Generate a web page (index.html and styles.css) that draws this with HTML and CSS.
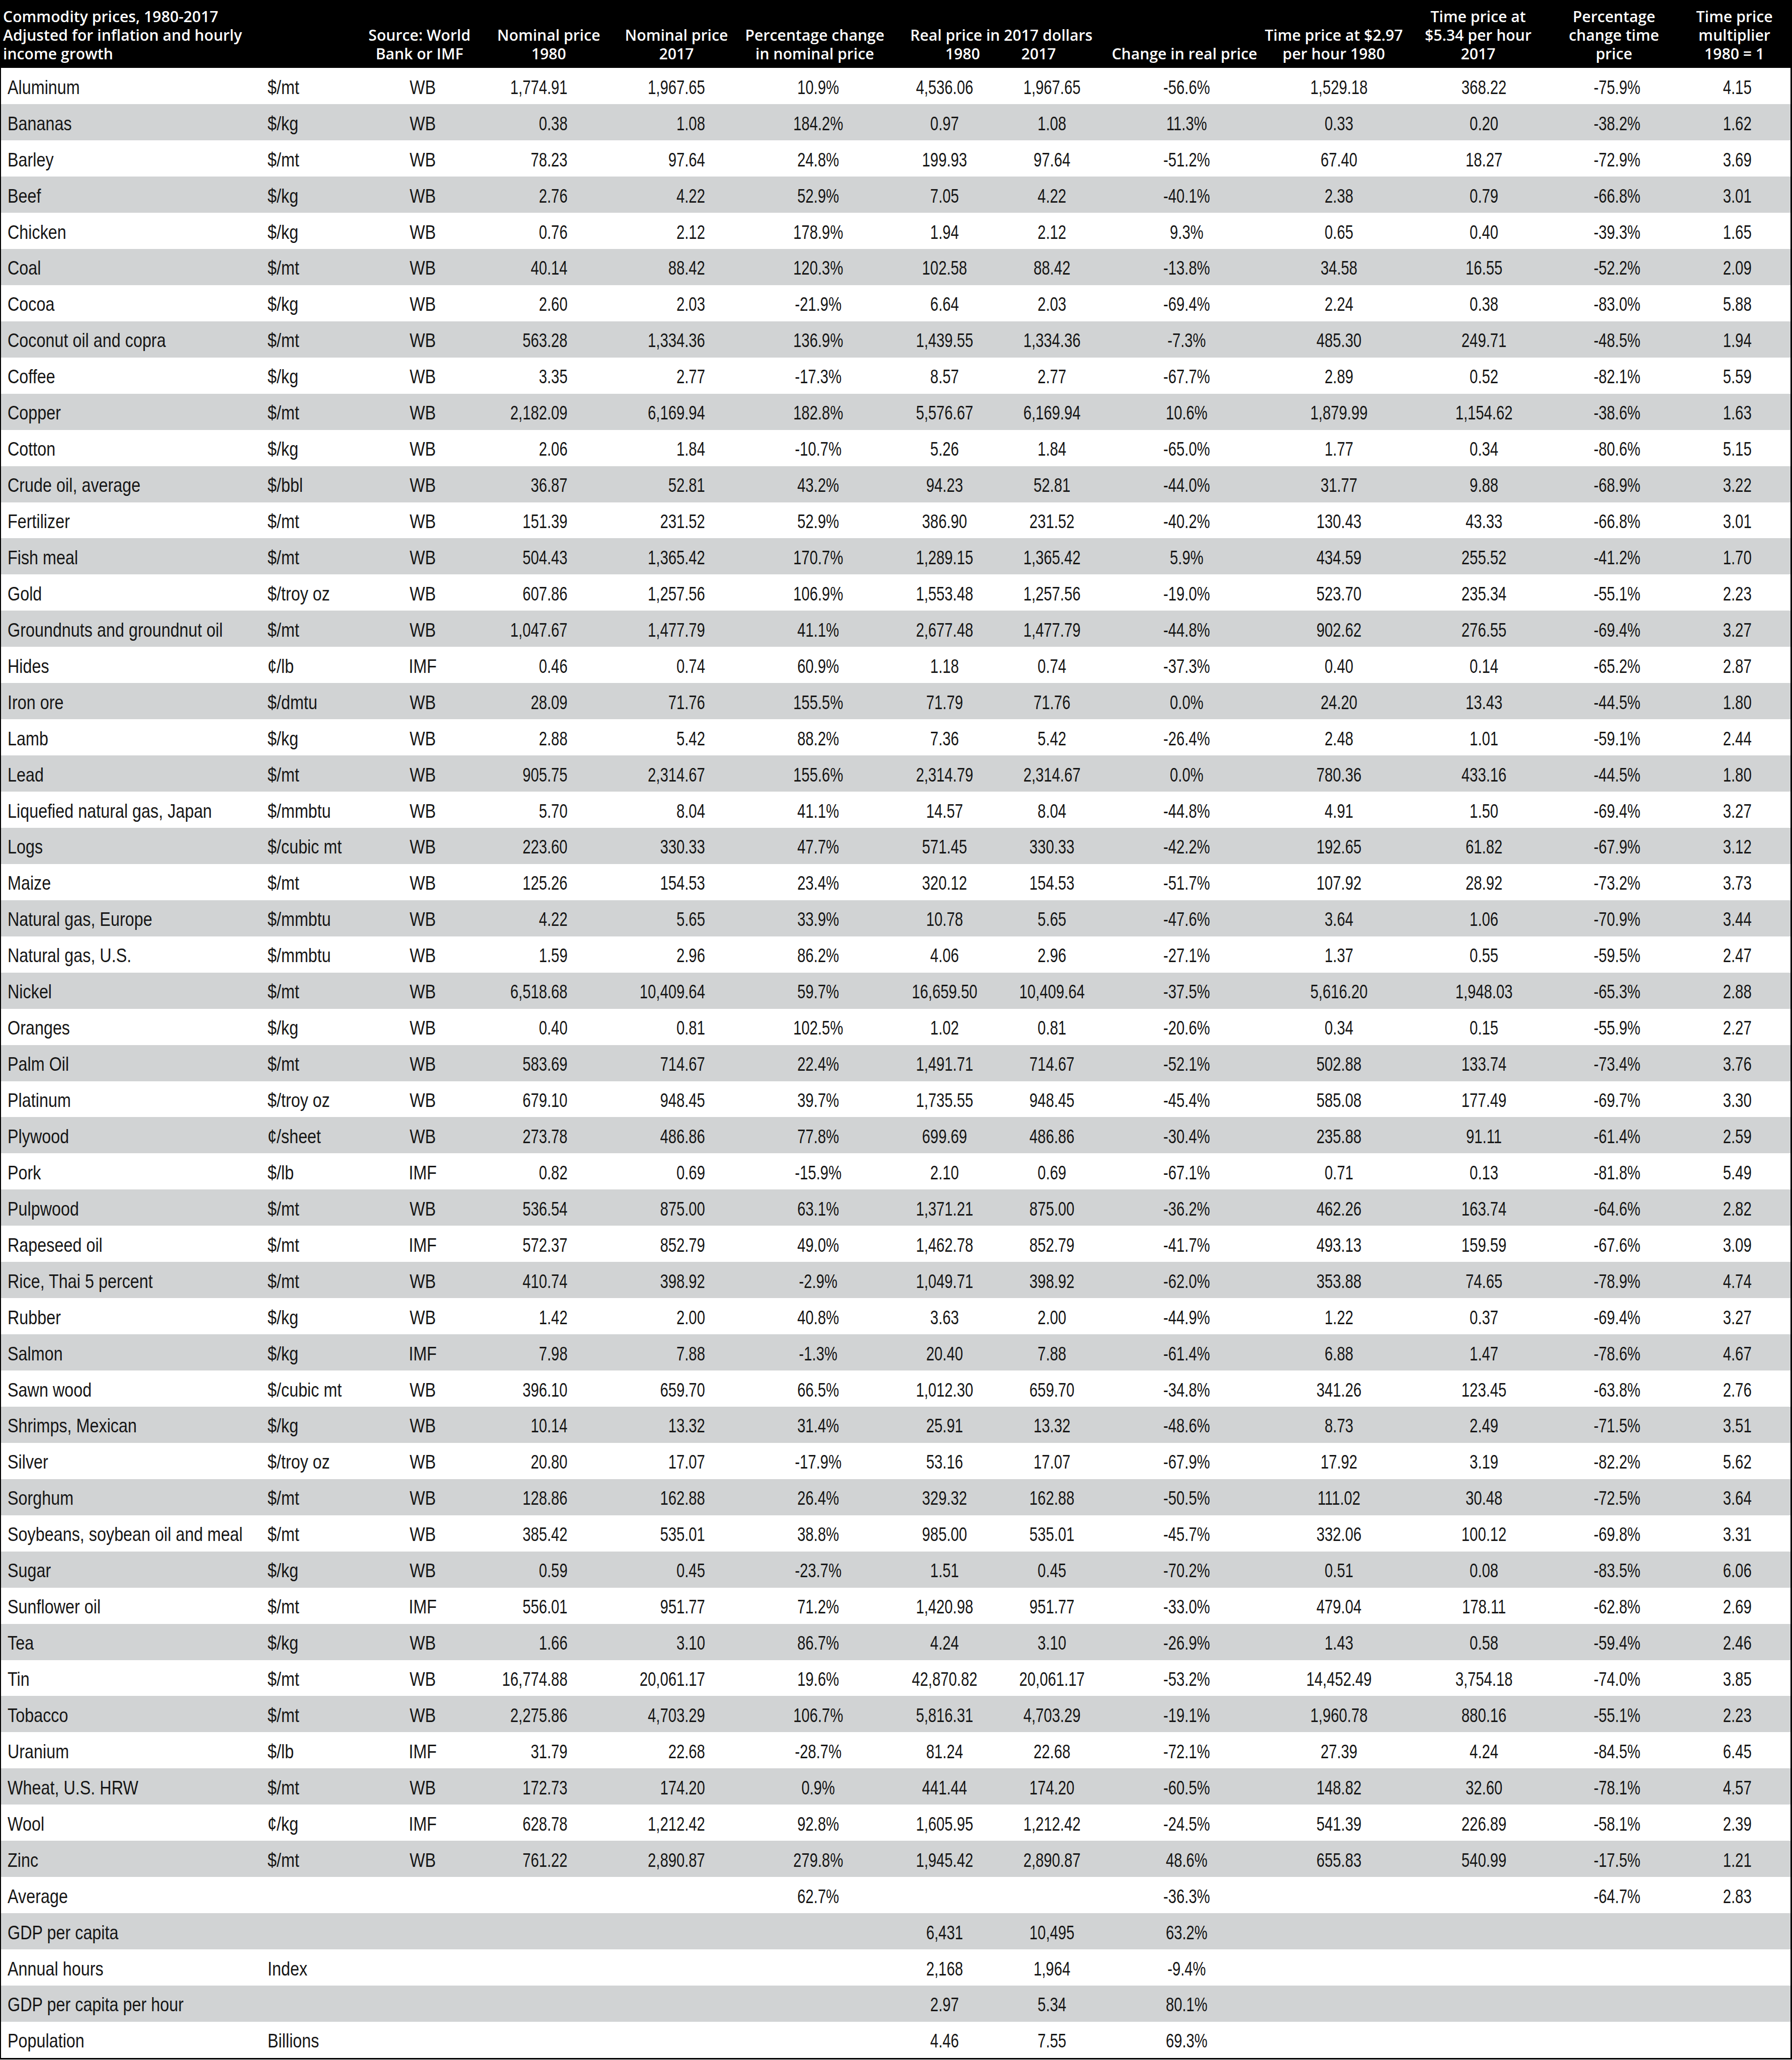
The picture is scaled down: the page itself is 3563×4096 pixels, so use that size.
FILE: index.html
```html
<!DOCTYPE html>
<html lang="en">
<head>
<meta charset="utf-8">
<title>Commodity prices, 1980-2017</title>
<link rel="stylesheet" href="styles.css">
</head>
<body>
<div class="table">
  <div class="head">
    <div class="h title">Commodity prices, 1980-2017<br>Adjusted for inflation and hourly<br>income growth</div>
    <div class="h">Source: World<br>Bank or IMF</div>
    <div class="h">Nominal price<br>1980</div>
    <div class="h">Nominal price<br>2017</div>
    <div class="h">Percentage change<br>in nominal price</div>
    <div class="h real"><div>Real price in 2017 dollars</div><div class="sub"><span>1980</span><span>2017</span></div></div>
    <div class="h">Change in real price</div>
    <div class="h">Time price at $2.97<br>per hour 1980</div>
    <div class="h">Time price at<br>$5.34 per hour<br>2017</div>
    <div class="h">Percentage<br>change time<br>price</div>
    <div class="h">Time price<br>multiplier<br>1980 = 1</div>
  </div>
  <div class="body">
    <div class="row"><span class="n">Aluminum</span><span class="u">$/mt</span><span class="s">WB</span><span class="a">1,774.91</span><span class="b">1,967.65</span><span class="c">10.9%</span><span class="c">4,536.06</span><span class="c">1,967.65</span><span class="c">-56.6%</span><span class="c">1,529.18</span><span class="c">368.22</span><span class="c">-75.9%</span><span class="c">4.15</span></div>
    <div class="row"><span class="n">Bananas</span><span class="u">$/kg</span><span class="s">WB</span><span class="a">0.38</span><span class="b">1.08</span><span class="c">184.2%</span><span class="c">0.97</span><span class="c">1.08</span><span class="c">11.3%</span><span class="c">0.33</span><span class="c">0.20</span><span class="c">-38.2%</span><span class="c">1.62</span></div>
    <div class="row"><span class="n">Barley</span><span class="u">$/mt</span><span class="s">WB</span><span class="a">78.23</span><span class="b">97.64</span><span class="c">24.8%</span><span class="c">199.93</span><span class="c">97.64</span><span class="c">-51.2%</span><span class="c">67.40</span><span class="c">18.27</span><span class="c">-72.9%</span><span class="c">3.69</span></div>
    <div class="row"><span class="n">Beef</span><span class="u">$/kg</span><span class="s">WB</span><span class="a">2.76</span><span class="b">4.22</span><span class="c">52.9%</span><span class="c">7.05</span><span class="c">4.22</span><span class="c">-40.1%</span><span class="c">2.38</span><span class="c">0.79</span><span class="c">-66.8%</span><span class="c">3.01</span></div>
    <div class="row"><span class="n">Chicken</span><span class="u">$/kg</span><span class="s">WB</span><span class="a">0.76</span><span class="b">2.12</span><span class="c">178.9%</span><span class="c">1.94</span><span class="c">2.12</span><span class="c">9.3%</span><span class="c">0.65</span><span class="c">0.40</span><span class="c">-39.3%</span><span class="c">1.65</span></div>
    <div class="row"><span class="n">Coal</span><span class="u">$/mt</span><span class="s">WB</span><span class="a">40.14</span><span class="b">88.42</span><span class="c">120.3%</span><span class="c">102.58</span><span class="c">88.42</span><span class="c">-13.8%</span><span class="c">34.58</span><span class="c">16.55</span><span class="c">-52.2%</span><span class="c">2.09</span></div>
    <div class="row"><span class="n">Cocoa</span><span class="u">$/kg</span><span class="s">WB</span><span class="a">2.60</span><span class="b">2.03</span><span class="c">-21.9%</span><span class="c">6.64</span><span class="c">2.03</span><span class="c">-69.4%</span><span class="c">2.24</span><span class="c">0.38</span><span class="c">-83.0%</span><span class="c">5.88</span></div>
    <div class="row"><span class="n">Coconut oil and copra</span><span class="u">$/mt</span><span class="s">WB</span><span class="a">563.28</span><span class="b">1,334.36</span><span class="c">136.9%</span><span class="c">1,439.55</span><span class="c">1,334.36</span><span class="c">-7.3%</span><span class="c">485.30</span><span class="c">249.71</span><span class="c">-48.5%</span><span class="c">1.94</span></div>
    <div class="row"><span class="n">Coffee</span><span class="u">$/kg</span><span class="s">WB</span><span class="a">3.35</span><span class="b">2.77</span><span class="c">-17.3%</span><span class="c">8.57</span><span class="c">2.77</span><span class="c">-67.7%</span><span class="c">2.89</span><span class="c">0.52</span><span class="c">-82.1%</span><span class="c">5.59</span></div>
    <div class="row"><span class="n">Copper</span><span class="u">$/mt</span><span class="s">WB</span><span class="a">2,182.09</span><span class="b">6,169.94</span><span class="c">182.8%</span><span class="c">5,576.67</span><span class="c">6,169.94</span><span class="c">10.6%</span><span class="c">1,879.99</span><span class="c">1,154.62</span><span class="c">-38.6%</span><span class="c">1.63</span></div>
    <div class="row"><span class="n">Cotton</span><span class="u">$/kg</span><span class="s">WB</span><span class="a">2.06</span><span class="b">1.84</span><span class="c">-10.7%</span><span class="c">5.26</span><span class="c">1.84</span><span class="c">-65.0%</span><span class="c">1.77</span><span class="c">0.34</span><span class="c">-80.6%</span><span class="c">5.15</span></div>
    <div class="row"><span class="n">Crude oil, average</span><span class="u">$/bbl</span><span class="s">WB</span><span class="a">36.87</span><span class="b">52.81</span><span class="c">43.2%</span><span class="c">94.23</span><span class="c">52.81</span><span class="c">-44.0%</span><span class="c">31.77</span><span class="c">9.88</span><span class="c">-68.9%</span><span class="c">3.22</span></div>
    <div class="row"><span class="n">Fertilizer</span><span class="u">$/mt</span><span class="s">WB</span><span class="a">151.39</span><span class="b">231.52</span><span class="c">52.9%</span><span class="c">386.90</span><span class="c">231.52</span><span class="c">-40.2%</span><span class="c">130.43</span><span class="c">43.33</span><span class="c">-66.8%</span><span class="c">3.01</span></div>
    <div class="row"><span class="n">Fish meal</span><span class="u">$/mt</span><span class="s">WB</span><span class="a">504.43</span><span class="b">1,365.42</span><span class="c">170.7%</span><span class="c">1,289.15</span><span class="c">1,365.42</span><span class="c">5.9%</span><span class="c">434.59</span><span class="c">255.52</span><span class="c">-41.2%</span><span class="c">1.70</span></div>
    <div class="row"><span class="n">Gold</span><span class="u">$/troy oz</span><span class="s">WB</span><span class="a">607.86</span><span class="b">1,257.56</span><span class="c">106.9%</span><span class="c">1,553.48</span><span class="c">1,257.56</span><span class="c">-19.0%</span><span class="c">523.70</span><span class="c">235.34</span><span class="c">-55.1%</span><span class="c">2.23</span></div>
    <div class="row"><span class="n">Groundnuts and groundnut oil</span><span class="u">$/mt</span><span class="s">WB</span><span class="a">1,047.67</span><span class="b">1,477.79</span><span class="c">41.1%</span><span class="c">2,677.48</span><span class="c">1,477.79</span><span class="c">-44.8%</span><span class="c">902.62</span><span class="c">276.55</span><span class="c">-69.4%</span><span class="c">3.27</span></div>
    <div class="row"><span class="n">Hides</span><span class="u">¢/lb</span><span class="s">IMF</span><span class="a">0.46</span><span class="b">0.74</span><span class="c">60.9%</span><span class="c">1.18</span><span class="c">0.74</span><span class="c">-37.3%</span><span class="c">0.40</span><span class="c">0.14</span><span class="c">-65.2%</span><span class="c">2.87</span></div>
    <div class="row"><span class="n">Iron ore</span><span class="u">$/dmtu</span><span class="s">WB</span><span class="a">28.09</span><span class="b">71.76</span><span class="c">155.5%</span><span class="c">71.79</span><span class="c">71.76</span><span class="c">0.0%</span><span class="c">24.20</span><span class="c">13.43</span><span class="c">-44.5%</span><span class="c">1.80</span></div>
    <div class="row"><span class="n">Lamb</span><span class="u">$/kg</span><span class="s">WB</span><span class="a">2.88</span><span class="b">5.42</span><span class="c">88.2%</span><span class="c">7.36</span><span class="c">5.42</span><span class="c">-26.4%</span><span class="c">2.48</span><span class="c">1.01</span><span class="c">-59.1%</span><span class="c">2.44</span></div>
    <div class="row"><span class="n">Lead</span><span class="u">$/mt</span><span class="s">WB</span><span class="a">905.75</span><span class="b">2,314.67</span><span class="c">155.6%</span><span class="c">2,314.79</span><span class="c">2,314.67</span><span class="c">0.0%</span><span class="c">780.36</span><span class="c">433.16</span><span class="c">-44.5%</span><span class="c">1.80</span></div>
    <div class="row"><span class="n">Liquefied natural gas, Japan</span><span class="u">$/mmbtu</span><span class="s">WB</span><span class="a">5.70</span><span class="b">8.04</span><span class="c">41.1%</span><span class="c">14.57</span><span class="c">8.04</span><span class="c">-44.8%</span><span class="c">4.91</span><span class="c">1.50</span><span class="c">-69.4%</span><span class="c">3.27</span></div>
    <div class="row"><span class="n">Logs</span><span class="u">$/cubic mt</span><span class="s">WB</span><span class="a">223.60</span><span class="b">330.33</span><span class="c">47.7%</span><span class="c">571.45</span><span class="c">330.33</span><span class="c">-42.2%</span><span class="c">192.65</span><span class="c">61.82</span><span class="c">-67.9%</span><span class="c">3.12</span></div>
    <div class="row"><span class="n">Maize</span><span class="u">$/mt</span><span class="s">WB</span><span class="a">125.26</span><span class="b">154.53</span><span class="c">23.4%</span><span class="c">320.12</span><span class="c">154.53</span><span class="c">-51.7%</span><span class="c">107.92</span><span class="c">28.92</span><span class="c">-73.2%</span><span class="c">3.73</span></div>
    <div class="row"><span class="n">Natural gas, Europe</span><span class="u">$/mmbtu</span><span class="s">WB</span><span class="a">4.22</span><span class="b">5.65</span><span class="c">33.9%</span><span class="c">10.78</span><span class="c">5.65</span><span class="c">-47.6%</span><span class="c">3.64</span><span class="c">1.06</span><span class="c">-70.9%</span><span class="c">3.44</span></div>
    <div class="row"><span class="n">Natural gas, U.S.</span><span class="u">$/mmbtu</span><span class="s">WB</span><span class="a">1.59</span><span class="b">2.96</span><span class="c">86.2%</span><span class="c">4.06</span><span class="c">2.96</span><span class="c">-27.1%</span><span class="c">1.37</span><span class="c">0.55</span><span class="c">-59.5%</span><span class="c">2.47</span></div>
    <div class="row"><span class="n">Nickel</span><span class="u">$/mt</span><span class="s">WB</span><span class="a">6,518.68</span><span class="b">10,409.64</span><span class="c">59.7%</span><span class="c">16,659.50</span><span class="c">10,409.64</span><span class="c">-37.5%</span><span class="c">5,616.20</span><span class="c">1,948.03</span><span class="c">-65.3%</span><span class="c">2.88</span></div>
    <div class="row"><span class="n">Oranges</span><span class="u">$/kg</span><span class="s">WB</span><span class="a">0.40</span><span class="b">0.81</span><span class="c">102.5%</span><span class="c">1.02</span><span class="c">0.81</span><span class="c">-20.6%</span><span class="c">0.34</span><span class="c">0.15</span><span class="c">-55.9%</span><span class="c">2.27</span></div>
    <div class="row"><span class="n">Palm Oil</span><span class="u">$/mt</span><span class="s">WB</span><span class="a">583.69</span><span class="b">714.67</span><span class="c">22.4%</span><span class="c">1,491.71</span><span class="c">714.67</span><span class="c">-52.1%</span><span class="c">502.88</span><span class="c">133.74</span><span class="c">-73.4%</span><span class="c">3.76</span></div>
    <div class="row"><span class="n">Platinum</span><span class="u">$/troy oz</span><span class="s">WB</span><span class="a">679.10</span><span class="b">948.45</span><span class="c">39.7%</span><span class="c">1,735.55</span><span class="c">948.45</span><span class="c">-45.4%</span><span class="c">585.08</span><span class="c">177.49</span><span class="c">-69.7%</span><span class="c">3.30</span></div>
    <div class="row"><span class="n">Plywood</span><span class="u">¢/sheet</span><span class="s">WB</span><span class="a">273.78</span><span class="b">486.86</span><span class="c">77.8%</span><span class="c">699.69</span><span class="c">486.86</span><span class="c">-30.4%</span><span class="c">235.88</span><span class="c">91.11</span><span class="c">-61.4%</span><span class="c">2.59</span></div>
    <div class="row"><span class="n">Pork</span><span class="u">$/lb</span><span class="s">IMF</span><span class="a">0.82</span><span class="b">0.69</span><span class="c">-15.9%</span><span class="c">2.10</span><span class="c">0.69</span><span class="c">-67.1%</span><span class="c">0.71</span><span class="c">0.13</span><span class="c">-81.8%</span><span class="c">5.49</span></div>
    <div class="row"><span class="n">Pulpwood</span><span class="u">$/mt</span><span class="s">WB</span><span class="a">536.54</span><span class="b">875.00</span><span class="c">63.1%</span><span class="c">1,371.21</span><span class="c">875.00</span><span class="c">-36.2%</span><span class="c">462.26</span><span class="c">163.74</span><span class="c">-64.6%</span><span class="c">2.82</span></div>
    <div class="row"><span class="n">Rapeseed oil</span><span class="u">$/mt</span><span class="s">IMF</span><span class="a">572.37</span><span class="b">852.79</span><span class="c">49.0%</span><span class="c">1,462.78</span><span class="c">852.79</span><span class="c">-41.7%</span><span class="c">493.13</span><span class="c">159.59</span><span class="c">-67.6%</span><span class="c">3.09</span></div>
    <div class="row"><span class="n">Rice, Thai 5 percent</span><span class="u">$/mt</span><span class="s">WB</span><span class="a">410.74</span><span class="b">398.92</span><span class="c">-2.9%</span><span class="c">1,049.71</span><span class="c">398.92</span><span class="c">-62.0%</span><span class="c">353.88</span><span class="c">74.65</span><span class="c">-78.9%</span><span class="c">4.74</span></div>
    <div class="row"><span class="n">Rubber</span><span class="u">$/kg</span><span class="s">WB</span><span class="a">1.42</span><span class="b">2.00</span><span class="c">40.8%</span><span class="c">3.63</span><span class="c">2.00</span><span class="c">-44.9%</span><span class="c">1.22</span><span class="c">0.37</span><span class="c">-69.4%</span><span class="c">3.27</span></div>
    <div class="row"><span class="n">Salmon</span><span class="u">$/kg</span><span class="s">IMF</span><span class="a">7.98</span><span class="b">7.88</span><span class="c">-1.3%</span><span class="c">20.40</span><span class="c">7.88</span><span class="c">-61.4%</span><span class="c">6.88</span><span class="c">1.47</span><span class="c">-78.6%</span><span class="c">4.67</span></div>
    <div class="row"><span class="n">Sawn wood</span><span class="u">$/cubic mt</span><span class="s">WB</span><span class="a">396.10</span><span class="b">659.70</span><span class="c">66.5%</span><span class="c">1,012.30</span><span class="c">659.70</span><span class="c">-34.8%</span><span class="c">341.26</span><span class="c">123.45</span><span class="c">-63.8%</span><span class="c">2.76</span></div>
    <div class="row"><span class="n">Shrimps, Mexican</span><span class="u">$/kg</span><span class="s">WB</span><span class="a">10.14</span><span class="b">13.32</span><span class="c">31.4%</span><span class="c">25.91</span><span class="c">13.32</span><span class="c">-48.6%</span><span class="c">8.73</span><span class="c">2.49</span><span class="c">-71.5%</span><span class="c">3.51</span></div>
    <div class="row"><span class="n">Silver</span><span class="u">$/troy oz</span><span class="s">WB</span><span class="a">20.80</span><span class="b">17.07</span><span class="c">-17.9%</span><span class="c">53.16</span><span class="c">17.07</span><span class="c">-67.9%</span><span class="c">17.92</span><span class="c">3.19</span><span class="c">-82.2%</span><span class="c">5.62</span></div>
    <div class="row"><span class="n">Sorghum</span><span class="u">$/mt</span><span class="s">WB</span><span class="a">128.86</span><span class="b">162.88</span><span class="c">26.4%</span><span class="c">329.32</span><span class="c">162.88</span><span class="c">-50.5%</span><span class="c">111.02</span><span class="c">30.48</span><span class="c">-72.5%</span><span class="c">3.64</span></div>
    <div class="row"><span class="n">Soybeans, soybean oil and meal</span><span class="u">$/mt</span><span class="s">WB</span><span class="a">385.42</span><span class="b">535.01</span><span class="c">38.8%</span><span class="c">985.00</span><span class="c">535.01</span><span class="c">-45.7%</span><span class="c">332.06</span><span class="c">100.12</span><span class="c">-69.8%</span><span class="c">3.31</span></div>
    <div class="row"><span class="n">Sugar</span><span class="u">$/kg</span><span class="s">WB</span><span class="a">0.59</span><span class="b">0.45</span><span class="c">-23.7%</span><span class="c">1.51</span><span class="c">0.45</span><span class="c">-70.2%</span><span class="c">0.51</span><span class="c">0.08</span><span class="c">-83.5%</span><span class="c">6.06</span></div>
    <div class="row"><span class="n">Sunflower oil</span><span class="u">$/mt</span><span class="s">IMF</span><span class="a">556.01</span><span class="b">951.77</span><span class="c">71.2%</span><span class="c">1,420.98</span><span class="c">951.77</span><span class="c">-33.0%</span><span class="c">479.04</span><span class="c">178.11</span><span class="c">-62.8%</span><span class="c">2.69</span></div>
    <div class="row"><span class="n">Tea</span><span class="u">$/kg</span><span class="s">WB</span><span class="a">1.66</span><span class="b">3.10</span><span class="c">86.7%</span><span class="c">4.24</span><span class="c">3.10</span><span class="c">-26.9%</span><span class="c">1.43</span><span class="c">0.58</span><span class="c">-59.4%</span><span class="c">2.46</span></div>
    <div class="row"><span class="n">Tin</span><span class="u">$/mt</span><span class="s">WB</span><span class="a">16,774.88</span><span class="b">20,061.17</span><span class="c">19.6%</span><span class="c">42,870.82</span><span class="c">20,061.17</span><span class="c">-53.2%</span><span class="c">14,452.49</span><span class="c">3,754.18</span><span class="c">-74.0%</span><span class="c">3.85</span></div>
    <div class="row"><span class="n">Tobacco</span><span class="u">$/mt</span><span class="s">WB</span><span class="a">2,275.86</span><span class="b">4,703.29</span><span class="c">106.7%</span><span class="c">5,816.31</span><span class="c">4,703.29</span><span class="c">-19.1%</span><span class="c">1,960.78</span><span class="c">880.16</span><span class="c">-55.1%</span><span class="c">2.23</span></div>
    <div class="row"><span class="n">Uranium</span><span class="u">$/lb</span><span class="s">IMF</span><span class="a">31.79</span><span class="b">22.68</span><span class="c">-28.7%</span><span class="c">81.24</span><span class="c">22.68</span><span class="c">-72.1%</span><span class="c">27.39</span><span class="c">4.24</span><span class="c">-84.5%</span><span class="c">6.45</span></div>
    <div class="row"><span class="n">Wheat, U.S. HRW</span><span class="u">$/mt</span><span class="s">WB</span><span class="a">172.73</span><span class="b">174.20</span><span class="c">0.9%</span><span class="c">441.44</span><span class="c">174.20</span><span class="c">-60.5%</span><span class="c">148.82</span><span class="c">32.60</span><span class="c">-78.1%</span><span class="c">4.57</span></div>
    <div class="row"><span class="n">Wool</span><span class="u">¢/kg</span><span class="s">IMF</span><span class="a">628.78</span><span class="b">1,212.42</span><span class="c">92.8%</span><span class="c">1,605.95</span><span class="c">1,212.42</span><span class="c">-24.5%</span><span class="c">541.39</span><span class="c">226.89</span><span class="c">-58.1%</span><span class="c">2.39</span></div>
    <div class="row"><span class="n">Zinc</span><span class="u">$/mt</span><span class="s">WB</span><span class="a">761.22</span><span class="b">2,890.87</span><span class="c">279.8%</span><span class="c">1,945.42</span><span class="c">2,890.87</span><span class="c">48.6%</span><span class="c">655.83</span><span class="c">540.99</span><span class="c">-17.5%</span><span class="c">1.21</span></div>
    <div class="row"><span class="n">Average</span><span class="u"></span><span class="s"></span><span class="a"></span><span class="b"></span><span class="c">62.7%</span><span class="c"></span><span class="c"></span><span class="c">-36.3%</span><span class="c"></span><span class="c"></span><span class="c">-64.7%</span><span class="c">2.83</span></div>
    <div class="row"><span class="n">GDP per capita</span><span class="u"></span><span class="s"></span><span class="a"></span><span class="b"></span><span class="c"></span><span class="c">6,431</span><span class="c">10,495</span><span class="c">63.2%</span><span class="c"></span><span class="c"></span><span class="c"></span><span class="c"></span></div>
    <div class="row"><span class="n">Annual hours</span><span class="u">Index</span><span class="s"></span><span class="a"></span><span class="b"></span><span class="c"></span><span class="c">2,168</span><span class="c">1,964</span><span class="c">-9.4%</span><span class="c"></span><span class="c"></span><span class="c"></span><span class="c"></span></div>
    <div class="row"><span class="n">GDP per capita per hour</span><span class="u"></span><span class="s"></span><span class="a"></span><span class="b"></span><span class="c"></span><span class="c">2.97</span><span class="c">5.34</span><span class="c">80.1%</span><span class="c"></span><span class="c"></span><span class="c"></span><span class="c"></span></div>
    <div class="row"><span class="n">Population</span><span class="u">Billions</span><span class="s"></span><span class="a"></span><span class="b"></span><span class="c"></span><span class="c">4.46</span><span class="c">7.55</span><span class="c">69.3%</span><span class="c"></span><span class="c"></span><span class="c"></span><span class="c"></span></div>
  </div>
</div>
</body>
</html>
```

FILE: styles.css
```css
html, body {
  margin: 0;
  padding: 0;
  background: #fff;
}

.table {
  width: 3563px;
  box-sizing: border-box;
  border-style: solid;
  border-color: #000;
  border-width: 0 3px 3px 2px;
}

.head {
  display: grid;
  grid-template-columns: 713px 238px 276px 232px 318px 424px 304px 290px 284px 256px 223px;
  height: 135.3px;
  background: #000;
  color: #fff;
  font-family: "Open Sans", "Liberation Sans", sans-serif;
  font-weight: 600;
  font-size: 30.2px;
  line-height: 36.7px;
}

.h {
  display: flex;
  flex-direction: column;
  justify-content: flex-end;
  align-items: center;
  text-align: center;
  white-space: nowrap;
  padding-bottom: 10px;
}

.h.title {
  align-items: flex-start;
  text-align: left;
  padding-left: 4px;
}

.h.real .sub {
  align-self: stretch;
  display: flex;
}

.h.real .sub span {
  width: 100px;
  text-align: center;
}

.h.real .sub span:first-child {
  margin-left: 85px;
}

.h.real .sub span + span {
  margin-left: 51px;
}

.row {
  display: grid;
  grid-template-columns: 530px 208px 201px 219px 309.6px 313.6px 190.2px 237.2px 296.8px 310.6px 265.2px 264.4px 212.4px;
  height: 71.94px;
  font-family: "Liberation Sans", Arial, sans-serif;
  font-size: 38.5px;
  color: #161616;
}

.row:nth-child(even) {
  background: #d1d3d4;
}

.row span {
  display: flex;
  align-items: center;
  padding-top: 5px;
  white-space: nowrap;
}

/* the source face is a narrow one: condense the glyphs horizontally */
.n, .u, .s {
  transform: scaleX(0.84);
}

.n {
  padding-left: 13px;
  transform-origin: 13px 50%;
}

.u {
  transform-origin: 0 50%;
}

.s {
  justify-content: center;
  transform-origin: 50% 50%;
}

.a, .b, .c {
  transform: scaleX(0.76);
}

.a {
  justify-content: flex-end;
  padding-right: 31.6px;
  transform-origin: calc(100% - 31.6px) 50%;
}

.b {
  justify-content: flex-end;
  padding-right: 67.7px;
  transform-origin: calc(100% - 67.7px) 50%;
}

.c {
  justify-content: center;
  transform-origin: 50% 50%;
}
```
